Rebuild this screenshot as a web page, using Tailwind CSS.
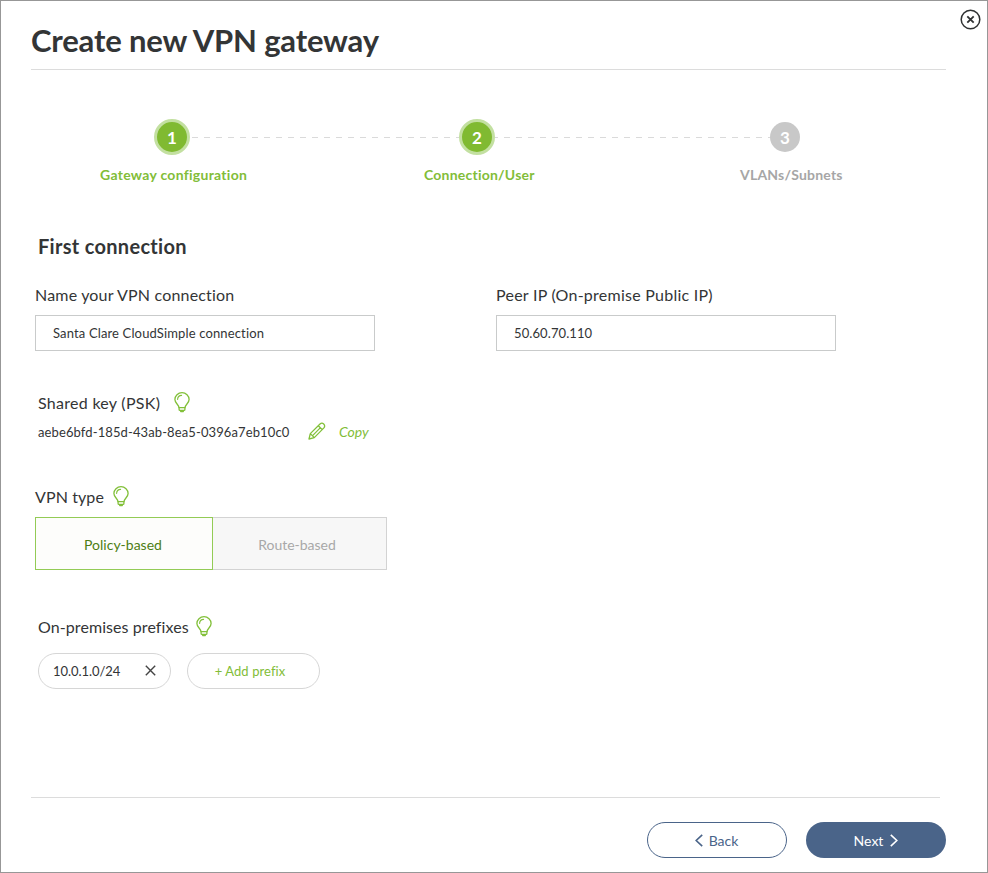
<!DOCTYPE html>
<html lang="en">
<head>
<meta charset="utf-8">
<title>Create new VPN gateway</title>
<script src="https://cdn.jsdelivr.net/npm/@tailwindcss/browser@4"></script>
</head>
<body class="bg-white">
<svg class="hidden">
  <symbol id="bulb" viewBox="0 0 16 21"><g fill="none" stroke="#82c03a" stroke-width="1.3" stroke-linecap="round" stroke-linejoin="round"><path d="M4.9 15.6C4.9 12.6 .9 11.2 .9 7.5a7.1 6.8 0 0 1 14.2 0C15.1 11.2 11.1 12.6 11.1 15.6z"/><path d="M3.6 7.4A4.2 4.2 0 0 1 7.6 3.4" stroke-width="1.1"/><path d="M5.1 15.6v1.8q0 .9.9.9h4q.9 0 .9-.9v-1.8"/><path d="M6.8 19.5h2.4" stroke-width="1.6"/></g></symbol>
</svg>
<main class="relative flex h-[873px] w-[988px] flex-col overflow-hidden border border-[#979797] bg-white font-['Lato',sans-serif] text-[#333536]">
  <button class="absolute top-[8px] right-[6px] size-[21px]" aria-label="Close"><svg class="size-[21px]" viewBox="0 0 21 21" fill="none" stroke="#2f3132"><circle cx="10.5" cy="10.5" r="9.3" stroke-width="1.5"/><path d="M7.3 7.3l6.4 6.4M13.7 7.3l-6.4 6.4" stroke-width="1.8"/></svg></button>
  <header class="mr-[41px] ml-[30px] flex h-[69px] shrink-0 items-center border-b border-[#dcdcdc] pt-[9px]">
    <h1 class="text-[31px] leading-10 font-bold tracking-[-0.17px] whitespace-nowrap">Create new VPN gateway</h1>
  </header>

  <nav class="mt-[49px] ml-[153px] flex h-[36px] w-[646px] shrink-0 items-center text-[17px] font-bold text-white">
    <div class="grid size-[36px] place-items-center rounded-full border-[3px] border-[#c3e0a1] bg-[#80ba31] pt-[2px]">1</div>
    <svg class="h-px w-[269px]"><path d="M2 .5H269" stroke="#dadada" stroke-dasharray="6 6"/></svg>
    <div class="grid size-[36px] place-items-center rounded-full border-[3px] border-[#c3e0a1] bg-[#80ba31] pt-[2px]">2</div>
    <svg class="h-px w-[275px]"><path d="M-3 .5H275" stroke="#dadada" stroke-dasharray="6 6"/></svg>
    <div class="grid size-[30px] place-items-center rounded-full bg-[#c8c8c8] pt-[2px]">3</div>
  </nav>
  <div class="mt-[9px] ml-[99px] flex h-5 shrink-0 items-center text-[14px] font-bold whitespace-nowrap text-[#82bd38]">
    <div class="w-[324px] tracking-[0.28px]">Gateway configuration</div>
    <div class="w-[316px] tracking-[0.22px]">Connection/User</div>
    <div class="tracking-[0.2px] text-[#a6a6a6]">VLANs/Subnets</div>
  </div>

  <h2 class="mt-[50px] ml-[37px] h-[24px] shrink-0 text-[20px] leading-[25px] font-bold tracking-[0.3px]">First connection</h2>

  <section class="mt-[27px] ml-[34px] flex shrink-0 gap-[121px] text-[16px]">
    <label class="w-[340px]"><span class="block h-[20px] leading-[20px] tracking-[0.18px]">Name your VPN connection</span>
      <span class="mt-[10px] flex h-[36px] items-center border border-[#c9cbcb] pt-[2px] pl-[17px] text-[13px] tracking-[0.14px]">Santa Clare CloudSimple connection</span></label>
    <label class="w-[340px]"><span class="block h-[20px] leading-[20px] tracking-[0.25px]">Peer IP (On-premise Public IP)</span>
      <span class="mt-[10px] flex h-[36px] items-center border border-[#c9cbcb] pt-[2px] pl-[17px] text-[13px] tracking-[0.1px]">50.60.70.110</span></label>
  </section>

  <section class="mt-[41px] ml-[37px] shrink-0">
    <div class="flex h-[21px] items-center text-[16px]"><div class="w-[136px] tracking-[0.28px]">Shared key (PSK)</div><svg class="h-[21px] w-[16px]"><use href="#bulb"/></svg></div>
    <div class="mt-[8px] flex h-[20px] items-center text-[13px]"><div class="w-[270px] pt-[3px] tracking-[0.11px]">aebe6bfd-185d-43ab-8ea5-0396a7eb10c0</div>
      <svg class="h-[18px] w-[18px]" viewBox="0 0 18 18" fill="none" stroke="#82c03a" stroke-width="1.3" stroke-linejoin="round"><path d="M1 17l1.3-5.4L12 2q1.9-1.8 3.7 0t.2 3.9L6.3 15.6zM2.3 11.6l4 4M10.3 3.7l4 4M4.6 13.6l7.6-7.7"/></svg>
      <span class="ml-[13px] text-[14px] text-[#82bd38] italic">Copy</span></div>
  </section>

  <section class="mt-[45px] ml-[34px] shrink-0">
    <div class="flex h-[21px] items-center text-[16px]"><div class="w-[78px] tracking-[0.1px]">VPN type</div><svg class="h-[21px] w-[16px]"><use href="#bulb"/></svg></div>
    <div class="mt-[10px] flex h-[53px] text-[14px]">
      <button class="w-[178px] border border-[#93cb55] bg-[#fdfdfb] pt-[2px] pr-[2px] text-[#4d7d14]">Policy-based</button>
      <button class="w-[174px] border border-l-0 border-[#d3d3d3] bg-[#f7f7f7] pt-[2px] pr-[5px] text-[#a8a8a8]">Route-based</button>
    </div>
  </section>

  <section class="mt-[46px] ml-[37px] shrink-0">
    <div class="flex h-[21px] items-center text-[16px]"><div class="w-[158px] tracking-[0.08px]">On-premises prefixes</div><svg class="h-[21px] w-[16px]"><use href="#bulb"/></svg></div>
    <div class="mt-[16px] flex h-[36px] gap-[16px] text-[13px]">
      <div class="flex w-[133px] items-center rounded-full border border-[#d6d6d6] pl-[14px]"><div class="w-[93px] pt-[2px] tracking-[-0.06px]">10.0.1.0/24</div><svg class="-mt-px -ml-px size-[11px]" viewBox="0 0 11 11" stroke="#444" stroke-width="1.4"><path d="M.8.8l9.4 9.4M10.2.8L.8 10.2"/></svg></div>
      <button class="w-[133px] rounded-full border border-[#d6d6d6] pt-[2px] pr-[7px] tracking-[0.08px] text-[#82bd38]">+ Add prefix</button>
    </div>
  </section>

  <footer class="mt-[108px] mr-[41px] ml-[30px] shrink-0">
    <div class="mr-[6px] h-px bg-[#dcdcdc]"></div>
    <div class="mt-[24px] flex justify-end gap-[19px] text-[14px]">
      <button class="flex h-[36px] w-[140px] items-center justify-center gap-[6px] rounded-full border border-[#4a6489] pr-px text-[#4a6489]"><svg class="h-[13px] w-[8px]" viewBox="0 0 8 13" fill="none" stroke="currentColor" stroke-width="1.6"><path d="M7.2.8L1.2 6.5l6 5.7"/></svg><span>Back</span></button>
      <button class="flex h-[36px] w-[140px] items-center justify-center gap-[7px] rounded-full bg-[#4a6489] text-white"><span>Next</span><svg class="h-[13px] w-[8px]" viewBox="0 0 8 13" fill="none" stroke="currentColor" stroke-width="1.6"><path d="M.8.8l6 5.7-6 5.7"/></svg></button>
    </div>
  </footer>
</main>
</body>
</html>
